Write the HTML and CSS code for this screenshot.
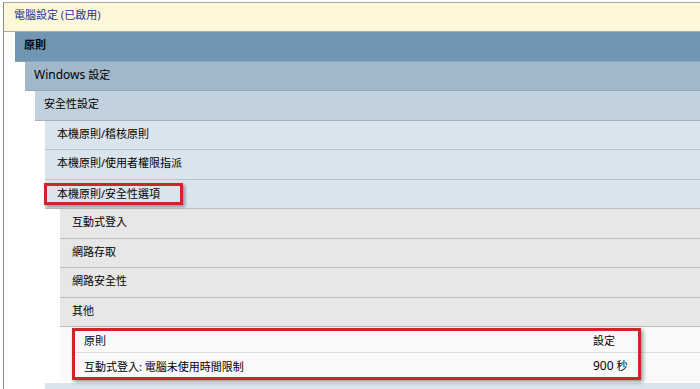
FILE: index.html
```html
<!DOCTYPE html>
<html lang="zh-Hant">
<head>
    <meta charset="UTF-8">
    <title>群組原則結果</title>
    <link rel="stylesheet" href="styles.css">
</head>
<body>
    <div class="report">
        <!-- Computer configuration heading -->
        <div class="scope-title">電腦設定 (已啟用)</div>

        <div class="level level-1">
            <div class="bar bar-1">原則</div>
            <div class="level level-2">
                <div class="bar bar-2"><span class="en">Windows</span> 設定</div>
                <div class="level level-3">
                    <div class="bar bar-3">安全性設定</div>
                    <div class="level level-4">
                        <div class="bar bar-4">本機原則/稽核原則</div>
                        <div class="bar bar-4">本機原則/使用者權限指派</div>
                        <div class="bar bar-4"><span class="callout">本機原則/安全性選項</span></div>

                        <!-- Security options sub categories -->
                        <div class="level level-5">
                            <div class="bar bar-5">互動式登入</div>
                            <div class="bar bar-5">網路存取</div>
                            <div class="bar bar-5">網路安全性</div>
                            <div class="bar bar-5">其他</div>
                            <div class="results">
                                <table class="policy-table">
                                    <tr>
                                        <th class="col-policy">原則</th>
                                        <th>設定</th>
                                    </tr>
                                    <tr>
                                        <td class="col-policy">互動式登入: 電腦未使用時間限制</td>
                                        <td><span class="en">900</span> 秒</td>
                                    </tr>
                                </table>
                                <div class="callout-box"></div>
                            </div>
                        </div>

                        <!-- next category, cut off by the window -->
                        <div class="bar bar-4"></div>
                    </div>
                </div>
            </div>
        </div>
    </div>
</body>
</html>
```

FILE: styles.css
```css
/* Base page */
html, body {
    overflow: hidden;
}

body {
    margin: 0;
    background-color: #ffffff;
    font-family: "Noto Sans", "Noto Sans CJK TC", sans-serif;
    font-size: 11px;
    color: #000;
}

.en {
    font-size: 12px;
}

/* Outer report frame */
.report {
    width: 800px;
    margin: 2px 0 0 3px;
    border-top: 1px solid #a4a4a4;
    border-left: 1px solid #8c8c8c;
    min-height: 400px;
}

/* Yellow heading for the scope */
.scope-title {
    height: 29px;
    line-height: 23px;
    padding-left: 10px;
    background-color: #fef7d7;
    border-bottom: 1px solid #a9aaa6;
    color: #1a33a0;
    box-sizing: border-box;
}

/* Nesting levels */
.level-1 {
    margin-left: 11px;
}

.level-2,
.level-3,
.level-4 {
    margin-left: 10px;
}

.level-5 {
    margin-left: 15px;
}

/* Category bars */
.bar {
    height: 29.5px;
    line-height: 25px;
    box-sizing: border-box;
    border-bottom: 1px solid #b4bcc4;
    white-space: nowrap;
}

.bar-1 {
    background-color: #7096b4;
    border-bottom-color: #88a2b8;
    padding-left: 9px;
    font-weight: bold;
}

.bar-2 {
    background-color: #a1b8cb;
    border-bottom-color: #9aa6b0;
    padding-left: 9px;
}

.bar-3 {
    background-color: #c1d2de;
    border-bottom-color: #a9b3bb;
    padding-left: 9px;
}

.bar-4 {
    background-color: #dae4ec;
    border-bottom-color: #b9c1c8;
    padding-left: 12px;
}

.bar-5 {
    background-color: #e7e7e7;
    border-bottom-color: #bcbcbc;
    padding-left: 12px;
}

/* Red annotation around a single label */
.callout {
    display: inline-block;
    height: 22px;
    line-height: 16px;
    box-sizing: border-box;
    margin-left: -13px;
    padding: 0 20px 0 10px;
    border: 3px solid #d3222a;
    box-shadow: 2px 2px 3px rgba(0, 0, 0, 0.35);
    vertical-align: middle;
}

/* Policy result table */
.results {
    position: relative;
    background-color: #f9f9f9;
    padding-bottom: 4px;
    margin-bottom: 1px;
}

.policy-table {
    margin-left: 12px;
    width: calc(100% - 12px);
    border-collapse: collapse;
}

.policy-table th,
.policy-table td {
    height: 25px;
    padding: 0 0 0 12px;
    text-align: left;
    font-weight: normal;
    border-bottom: 1px solid #dedede;
    vertical-align: middle;
}

.policy-table tr:last-child td {
    border-bottom: none;
}

.col-policy {
    width: 497px;
}

/* Red annotation drawn over the table */
.callout-box {
    position: absolute;
    left: 12px;
    top: 1px;
    width: 569px;
    height: 52px;
    box-sizing: border-box;
    border: 3px solid #d3222a;
    box-shadow: 2px 2px 4px rgba(0, 0, 0, 0.4);
    pointer-events: none;
}
```
